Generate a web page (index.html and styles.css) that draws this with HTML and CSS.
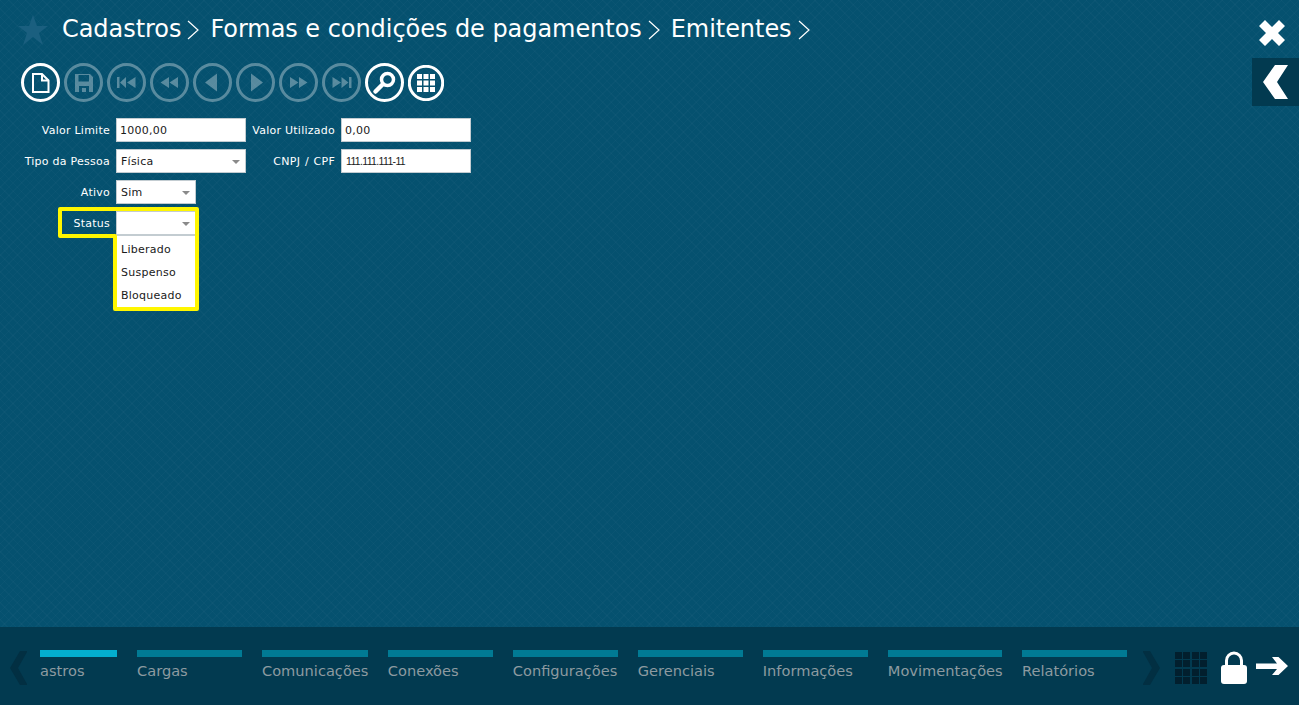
FILE: index.html
```html
<!DOCTYPE html>
<html lang="pt-BR">
<head>
    <meta charset="UTF-8">
    <title>Emitentes</title>
    <link rel="stylesheet" href="styles.css">
</head>
<body>
    <div class="page">
        <header class="top">
            <svg class="star" viewBox="0 0 32 32"><polygon points="16,1 20,12 31,12 22,19 26,31 16,23 6,31 10,19 1,12 12,12"/></svg>
            <nav class="crumbs">
                <span>Cadastros</span>
                <svg class="crumb-sep" viewBox="0 0 12 20"><polyline points="1,1 11,10 1,19"/></svg>
                <span>Formas e condições de pagamentos</span>
                <svg class="crumb-sep" viewBox="0 0 12 20"><polyline points="1,1 11,10 1,19"/></svg>
                <span>Emitentes</span>
                <svg class="crumb-sep" viewBox="0 0 12 20"><polyline points="1,1 11,10 1,19"/></svg>
            </nav>
        </header>

        <div class="toolbar">
            <svg class="tool" viewBox="0 0 39 39"><circle cx="19.5" cy="19.5" r="18"/><path class="line" d="M12 11H21L27.5 17.5V29H12Z"/><path class="line" d="M21 11V17.5H27.5"/></svg>
            <svg class="tool off" viewBox="0 0 39 39"><circle cx="19.5" cy="19.5" r="18"/><path class="fill" fill-rule="evenodd" d="M11 11H26L29 14V29H11ZM14.500 12V18.500H25V12ZM15 23V29H18V25H22V29H25V23Z"/></svg>
            <svg class="tool off" viewBox="0 0 39 39"><circle cx="19.5" cy="19.500" r="18"/><path class="fill" d="M10 14H12.500V25H10ZM19 14V25L13 19.500ZM28.500 14V25L20 19.500Z"/></svg>
            <svg class="tool off" viewBox="0 0 39 39"><circle cx="19.5" cy="19.5" r="18"/><path class="fill" d="M19 14V25L10.500 19.500ZM28 14V25L19.500 19.500Z"/></svg>
            <svg class="tool off" viewBox="0 0 39 39"><circle cx="19.5" cy="19.5" r="18"/><path class="fill" d="M24 10.500V28.500L12 19.500Z"/></svg>
            <svg class="tool off" viewBox="0 0 39 39"><circle cx="19.5" cy="19.5" r="18"/><path class="fill" d="M15 10.500V28.500L27 19.500Z"/></svg>
            <svg class="tool off" viewBox="0 0 39 39"><circle cx="19.5" cy="19.5" r="18"/><path class="fill" d="M11 14V25L19.500 19.500ZM20 14V25L28.500 19.500Z"/></svg>
            <svg class="tool off" viewBox="0 0 39 39"><circle cx="19.5" cy="19.5" r="18"/><path class="fill" d="M10.500 14V25L19 19.500ZM19.500 14V25L26.500 19.500ZM27 14H29.500V25H27Z"/></svg>
            <svg class="tool" viewBox="0 0 39 39"><circle cx="19.5" cy="19.5" r="18"/><circle class="line thick" cx="22.500" cy="16.500" r="6"/><path class="handle" d="M17.500 21.500L10.500 28.500"/></svg>
            <svg class="tool small" viewBox="0 0 36 36"><circle cx="18" cy="18" r="16.700"/><path class="fill" d="M9 9h5v5H9zM15.500 9h5v5h-5zM22 9h5v5h-5zM9 15.500h5v5H9zM15.500 15.500h5v5h-5zM22 15.500h5v5h-5zM9 22h5v5H9zM15.500 22h5v5h-5zM22 22h5v5h-5z"/></svg>
        </div>

        <main class="form">
            <div class="row">
                <label class="label">Valor Limite</label>
                <input class="input wide" value="1000,00">
                <label class="label second">Valor Utilizado</label>
                <input class="input wide" value="0,00">
            </div>
            <div class="row">
                <label class="label">Tipo da Pessoa</label>
                <div class="select wide">Física<i class="caret"></i></div>
                <label class="label second spaced">CNPJ / CPF</label>
                <input class="input wide narrow-text" value="111.111.111-11">
            </div>
            <div class="row">
                <label class="label">Ativo</label>
                <div class="select short">Sim<i class="caret"></i></div>
            </div>
            <div class="row">
                <label class="label">Status</label>
                <div class="select short open">
                    <i class="caret"></i>
                    <ul class="options">
                        <li>Liberado</li>
                        <li>Suspenso</li>
                        <li>Bloqueado</li>
                    </ul>
                </div>
            </div>
        </main>

        <footer class="bottom">
            <svg class="nav-arrow" viewBox="0 0 18 34"><polygon points="17,0 17,1 8,17 17,33 17,34 10,34 0,17 10,0"/></svg>
            <ul class="tabs">
                <li class="tab current">astros</li>
                <li class="tab">Cargas</li>
                <li class="tab">Comunicações</li>
                <li class="tab">Conexões</li>
                <li class="tab">Configurações</li>
                <li class="tab">Gerenciais</li>
                <li class="tab">Informações</li>
                <li class="tab">Movimentações</li>
                <li class="tab">Relatórios</li>
            </ul>
            <svg class="nav-arrow" viewBox="0 0 18 34"><polygon points="1,0 8,0 18,17 8,34 1,34 1,33 10,17 1,1"/></svg>
            <svg class="apps" viewBox="0 0 32 32"><path d="M0 0h7v7H0zM8 0h7v7H8zM17 0h7v7h-7zM25 0h7v7h-7zM0 8h7v7H0zM8 8h7v7H8zM17 8h7v7h-7zM25 8h7v7h-7zM0 17h7v7H0zM8 17h7v7H8zM17 17h7v7h-7zM25 17h7v7h-7zM0 25h7v7H0zM8 25h7v7H8zM17 25h7v7h-7zM25 25h7v7h-7z"/></svg>
            <svg class="lock" viewBox="0 0 26 33"><path class="shackle" d="M5.500 15V9.500a7.500 7.500 0 0 1 15 0V15"/><rect y="14" width="26" height="19" rx="3"/></svg>
            <svg class="go" viewBox="0 0 32 18"><path d="M0 6.500H21L16 0H22.500L32 9L22.500 18H16L21 12H0Z"/></svg>
        </footer>
    </div>

    <svg class="close" viewBox="0 0 26 26"><path d="M6 0L13 7L20 0L26 6L19 13L26 20L20 26L13 19L6 26L0 20L7 13L0 6Z"/></svg>
    <div class="back">
        <svg viewBox="0 0 25 34"><polygon points="12,0 25,0 14,17 25,34 12,34 0,17"/></svg>
    </div>

    <svg class="highlight" viewBox="0 0 1299 705"><path d="M60 209H197V309H115V236H60Z"/></svg>
</body>
</html>
```

FILE: styles.css
```css
* {
    margin: 0;
    padding: 0;
    box-sizing: border-box;
}

body {
    font-family: "DejaVu Sans", Verdana, sans-serif;
    background-color: #05516f;
    background-image:
        repeating-linear-gradient(45deg, rgba(255, 255, 255, 0.018) 0 1px, transparent 1px 6px),
        repeating-linear-gradient(-45deg, rgba(255, 255, 255, 0.018) 0 1px, transparent 1px 6px);
    color: #ffffff;
    height: 100vh;
    overflow: hidden;
}

.page {
    height: 100%;
    display: flex;
    flex-direction: column;
}

/* header */
.top {
    display: flex;
    align-items: center;
    height: 63px;
    padding: 0 0 6px 17px;
}

.star {
    width: 32px;
    height: 32px;
    fill: #1a5f7f;
    margin: 2px 13px 0 0;
}

.crumbs {
    display: flex;
    align-items: center;
    font-size: 24px;
    letter-spacing: -0.05px;
    white-space: nowrap;
}

.crumb-sep {
    width: 12px;
    height: 20px;
    margin: 2px 11px 0 6px;
    fill: none;
    stroke: #ffffff;
    stroke-width: 1.2;
}

/* toolbar */
.toolbar {
    display: flex;
    align-items: center;
    gap: 4px;
    padding-left: 21px;
    height: 39px;
}

.tool {
    width: 39px;
    height: 39px;
}

.tool.small {
    width: 36px;
    height: 36px;
}

.tool circle {
    fill: none;
    stroke: #ffffff;
    stroke-width: 3;
}

.tool .line {
    fill: none;
    stroke: #ffffff;
    stroke-width: 2;
}

.tool .line.thick {
    stroke-width: 3.5;
}

.tool .handle {
    fill: none;
    stroke: #ffffff;
    stroke-width: 4.5;
    stroke-linecap: round;
}

.tool .fill {
    fill: #ffffff;
}

.tool.off {
    opacity: 0.33;
}

/* form */
.form {
    flex: 1;
    padding-top: 16px;
}

.row {
    display: flex;
    align-items: flex-start;
    height: 24px;
    margin-bottom: 7px;
}

.label {
    width: 110px;
    margin-right: 6px;
    text-align: right;
    font-size: 11px;
    line-height: 26px;
    letter-spacing: 0.25px;
    white-space: nowrap;
}

.label.second {
    width: 89px;
    margin: 0 6px 0 0;
}

.label.spaced {
    word-spacing: 1px;
}

.input,
.select {
    height: 24px;
    background: #ffffff;
    border: 1px solid #c3ccd1;
    color: #1a1a1a;
    font-family: inherit;
    font-size: 11px;
    letter-spacing: 0.25px;
    padding: 0 4px;
}

.input {
    padding-left: 3px;
}

.wide {
    width: 130px;
}

.short {
    width: 80px;
}

.narrow-text {
    font-family: "Liberation Sans", Arial, sans-serif;
    font-size: 10.5px;
    letter-spacing: -0.65px;
    padding-left: 4px;
}

.select {
    position: relative;
    display: flex;
    align-items: center;
}

.caret {
    position: absolute;
    right: 5px;
    top: 10px;
    border-left: 4px solid transparent;
    border-right: 4px solid transparent;
    border-top: 4px solid #8a8a8a;
}

.open {
    height: 25px;
    border-bottom: 2px solid #c3ccd1;
}

.options {
    position: absolute;
    left: -1px;
    top: 24px;
    width: 80px;
    height: 72px;
    background: #ffffff;
    list-style: none;
    padding: 2px 0 0 5px;
}

.options li {
    height: 23px;
    line-height: 23px;
}

/* bottom bar */
.bottom {
    display: flex;
    align-items: flex-start;
    height: 78px;
    padding: 24px 0 0 10px;
    background: #023a50;
}

.nav-arrow {
    width: 18px;
    height: 34px;
    fill: #022f42;
    flex: none;
}

.tabs {
    display: flex;
    gap: 20px;
    list-style: none;
    margin: -1px 15px 0 12px;
    width: 1087px;
}

.tab {
    min-width: 105px;
    border-top: 7px solid #017a94;
    padding-top: 5px;
    font-size: 14.6px;
    line-height: 18px;
    color: #8d9aa0;
    white-space: nowrap;
}

.tab.current {
    min-width: 77px;
    border-top-color: #03aecf;
}

.apps {
    width: 32px;
    height: 32px;
    margin: 1px 14px 0 15px;
    fill: #021f2e;
    flex: none;
}

.lock {
    width: 26px;
    height: 33px;
    fill: #ffffff;
    flex: none;
}

.lock .shackle {
    fill: none;
    stroke: #ffffff;
    stroke-width: 3;
}

.go {
    width: 32px;
    height: 18px;
    margin: 6px 0 0 9px;
    fill: #ffffff;
    flex: none;
}

/* overlays */
.close {
    position: absolute;
    top: 20px;
    right: 14px;
    width: 26px;
    height: 26px;
    fill: #ffffff;
}

.back {
    position: absolute;
    top: 58px;
    right: 0;
    width: 47px;
    height: 48px;
    background: #023a50;
    display: flex;
    align-items: center;
    justify-content: center;
}

.back svg {
    width: 25px;
    height: 34px;
    fill: #ffffff;
}

.highlight {
    position: absolute;
    left: 0;
    top: 0;
    width: 1299px;
    height: 705px;
    pointer-events: none;
}

.highlight path {
    fill: none;
    stroke: #fff600;
    stroke-width: 4;
    stroke-linejoin: round;
}
```
